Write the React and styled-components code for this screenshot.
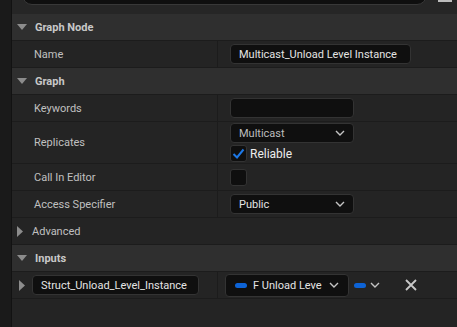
import React from "react"
import styled, { createGlobalStyle } from "styled-components"

const Global = createGlobalStyle`
  html, body {
    margin: 0;
    padding: 0;
    background: #242424;
    overflow: hidden;
  }
  body {
    font-family: Roboto, "Liberation Sans", sans-serif;
  }
`

const Page = styled.div`
  display: flex;
  width: 457px;
  height: 327px;
  background: #242424;
`

const Strip = styled.div`
  width: 11px;
  flex: none;
  background: #1a1a1a;
  border-right: 1px solid #121212;
`

const Panel = styled.div`
  flex: 1;
  display: flex;
  flex-direction: column;
  min-width: 0;
`

const TopBar = styled.div`
  height: 14px;
  flex: none;
  display: flex;
  align-items: flex-start;
  padding: 0 5px 0 10px;
  background: #262626;
  overflow: hidden;
`

const Search = styled.div`
  width: 405px;
  height: 20px;
  margin-top: -15px;
  box-sizing: border-box;
  background: #0f0f0f;
  border: 1px solid #383838;
  border-radius: 10px;
`

const ScrollThumb = styled.div`
  width: 14px;
  height: 2px;
  margin-left: auto;
  background: #bcbcbc;
`

const Header = styled.div`
  height: 26px;
  flex: none;
  display: flex;
  align-items: center;
  gap: 8px;
  padding-left: 5px;
  background: #2f2f2f;
  border-bottom: 1px solid #1c1c1c;
  color: #c8c8c8;
  font-size: 11px;
  font-weight: 700;
`

const Collapsed = styled.div`
  height: 26px;
  flex: none;
  display: flex;
  align-items: center;
  gap: 8px;
  padding-left: 5px;
  border-bottom: 1px solid #1c1c1c;
  color: #c0c0c0;
  font-size: 11px;
`

const Row = styled.div`
  display: grid;
  grid-template-columns: 206px 1fr;
  height: ${p => p.h || 26}px;
  flex: none;
  border-bottom: 1px solid #1c1c1c;
`

const Label = styled.div`
  display: flex;
  align-items: center;
  gap: 6px;
  padding-left: ${p => p.pad || 22}px;
  border-right: 1px solid #1c1c1c;
  color: #c0c0c0;
  font-size: 11px;
`

const Value = styled.div`
  display: flex;
  flex-direction: ${p => (p.col ? "column" : "row")};
  justify-content: ${p => (p.col ? "center" : "flex-start")};
  align-items: ${p => (p.col ? "flex-start" : "center")};
  gap: ${p => p.gap || 0}px;
  padding-left: ${p => p.pad || 12}px;
`

const Field = styled.div`
  width: ${p => p.w || 124}px;
  height: ${p => p.h || 20}px;
  flex: none;
  box-sizing: border-box;
  display: flex;
  align-items: center;
  gap: 6px;
  padding: 0 ${p => p.px || 8}px;
  background: #0f0f0f;
  border: 1px solid #333;
  border-radius: 4px;
  color: ${p => (p.dim ? "#bdbdbd" : "#e4e4e4")};
  font-size: 11px;
  white-space: nowrap;
  overflow: hidden;
`

const Grow = styled.span`
  flex: 1;
  overflow: hidden;
`

const Box = styled.div`
  width: 17px;
  height: 17px;
  box-sizing: border-box;
  display: flex;
  align-items: center;
  justify-content: center;
  background: #0f0f0f;
  border: 1px solid #333;
  border-radius: 3px;
`

const CheckLine = styled.div`
  display: flex;
  align-items: center;
  gap: 3px;
  color: #eeeeee;
  font-size: 12px;
`

const Pill = styled.span`
  width: 12px;
  height: 5px;
  flex: none;
  border-radius: 3px;
  background: #0d63d6;
`

const PinGroup = styled.div`
  display: flex;
  align-items: center;
  gap: 4px;
  margin-left: 5px;
`

const Close = styled.div`
  margin-left: 25px;
  display: flex;
`

const Down = () => (
  <svg width="10" height="7" viewBox="0 0 10 7">
    <path d="M0 0 L10 0 L5 6 Z" fill="#8c8c8c" />
  </svg>
)

const Right = () => (
  <svg width="7" height="11" viewBox="0 0 7 11">
    <path d="M0 0 L6 5.5 L0 11 Z" fill="#8c8c8c" />
  </svg>
)

const Chevron = () => (
  <svg width="10" height="6" viewBox="0 0 10 6">
    <path d="M1 1 L5 5 L9 1" fill="none" stroke="#c4c4c4" strokeWidth="1.4" />
  </svg>
)

const Tick = () => (
  <svg width="13" height="11" viewBox="0 0 13 11">
    <path d="M1.5 6 L5 9.5 L11.5 1.5" fill="none" stroke="#1d78e6" strokeWidth="2" />
  </svg>
)

const Cross = () => (
  <svg width="12" height="12" viewBox="0 0 12 12">
    <path d="M1 1 L11 11 M11 1 L1 11" stroke="#c8c8c8" strokeWidth="1.8" />
  </svg>
)

const App = () => {
  return (
    <Page>
      <Global />
      <Strip />
      <Panel>
        <TopBar>
          <Search />
          <ScrollThumb />
        </TopBar>

        <Header>
          <Down />
          Graph Node
        </Header>
        <Row>
          <Label>Name</Label>
          <Value>
            <Field w={181}>Multicast_Unload Level Instance</Field>
          </Value>
        </Row>

        <Header>
          <Down />
          Graph
        </Header>
        <Row>
          <Label>Keywords</Label>
          <Value>
            <Field />
          </Value>
        </Row>
        <Row h={41}>
          <Label>Replicates</Label>
          <Value col gap={2}>
            <Field dim>
              <Grow>Multicast</Grow>
              <Chevron />
            </Field>
            <CheckLine>
              <Box>
                <Tick />
              </Box>
              Reliable
            </CheckLine>
          </Value>
        </Row>
        <Row>
          <Label>Call In Editor</Label>
          <Value>
            <Box />
          </Value>
        </Row>
        <Row>
          <Label>Access Specifier</Label>
          <Value>
            <Field>
              <Grow>Public</Grow>
              <Chevron />
            </Field>
          </Value>
        </Row>

        <Collapsed>
          <Right />
          Advanced
        </Collapsed>

        <Header>
          <Down />
          Inputs
        </Header>
        <Row>
          <Label pad={7}>
            <Right />
            <Field w={167} h={20}>Struct_Unload_Level_Instance</Field>
          </Label>
          <Value pad={7}>
            <Field w={124} h={23} px={9}>
              <Pill />
              <Grow>F Unload Leve</Grow>
              <Chevron />
            </Field>
            <PinGroup>
              <Pill />
              <Chevron />
            </PinGroup>
            <Close>
              <Cross />
            </Close>
          </Value>
        </Row>
      </Panel>
    </Page>
  )
}

export default App
